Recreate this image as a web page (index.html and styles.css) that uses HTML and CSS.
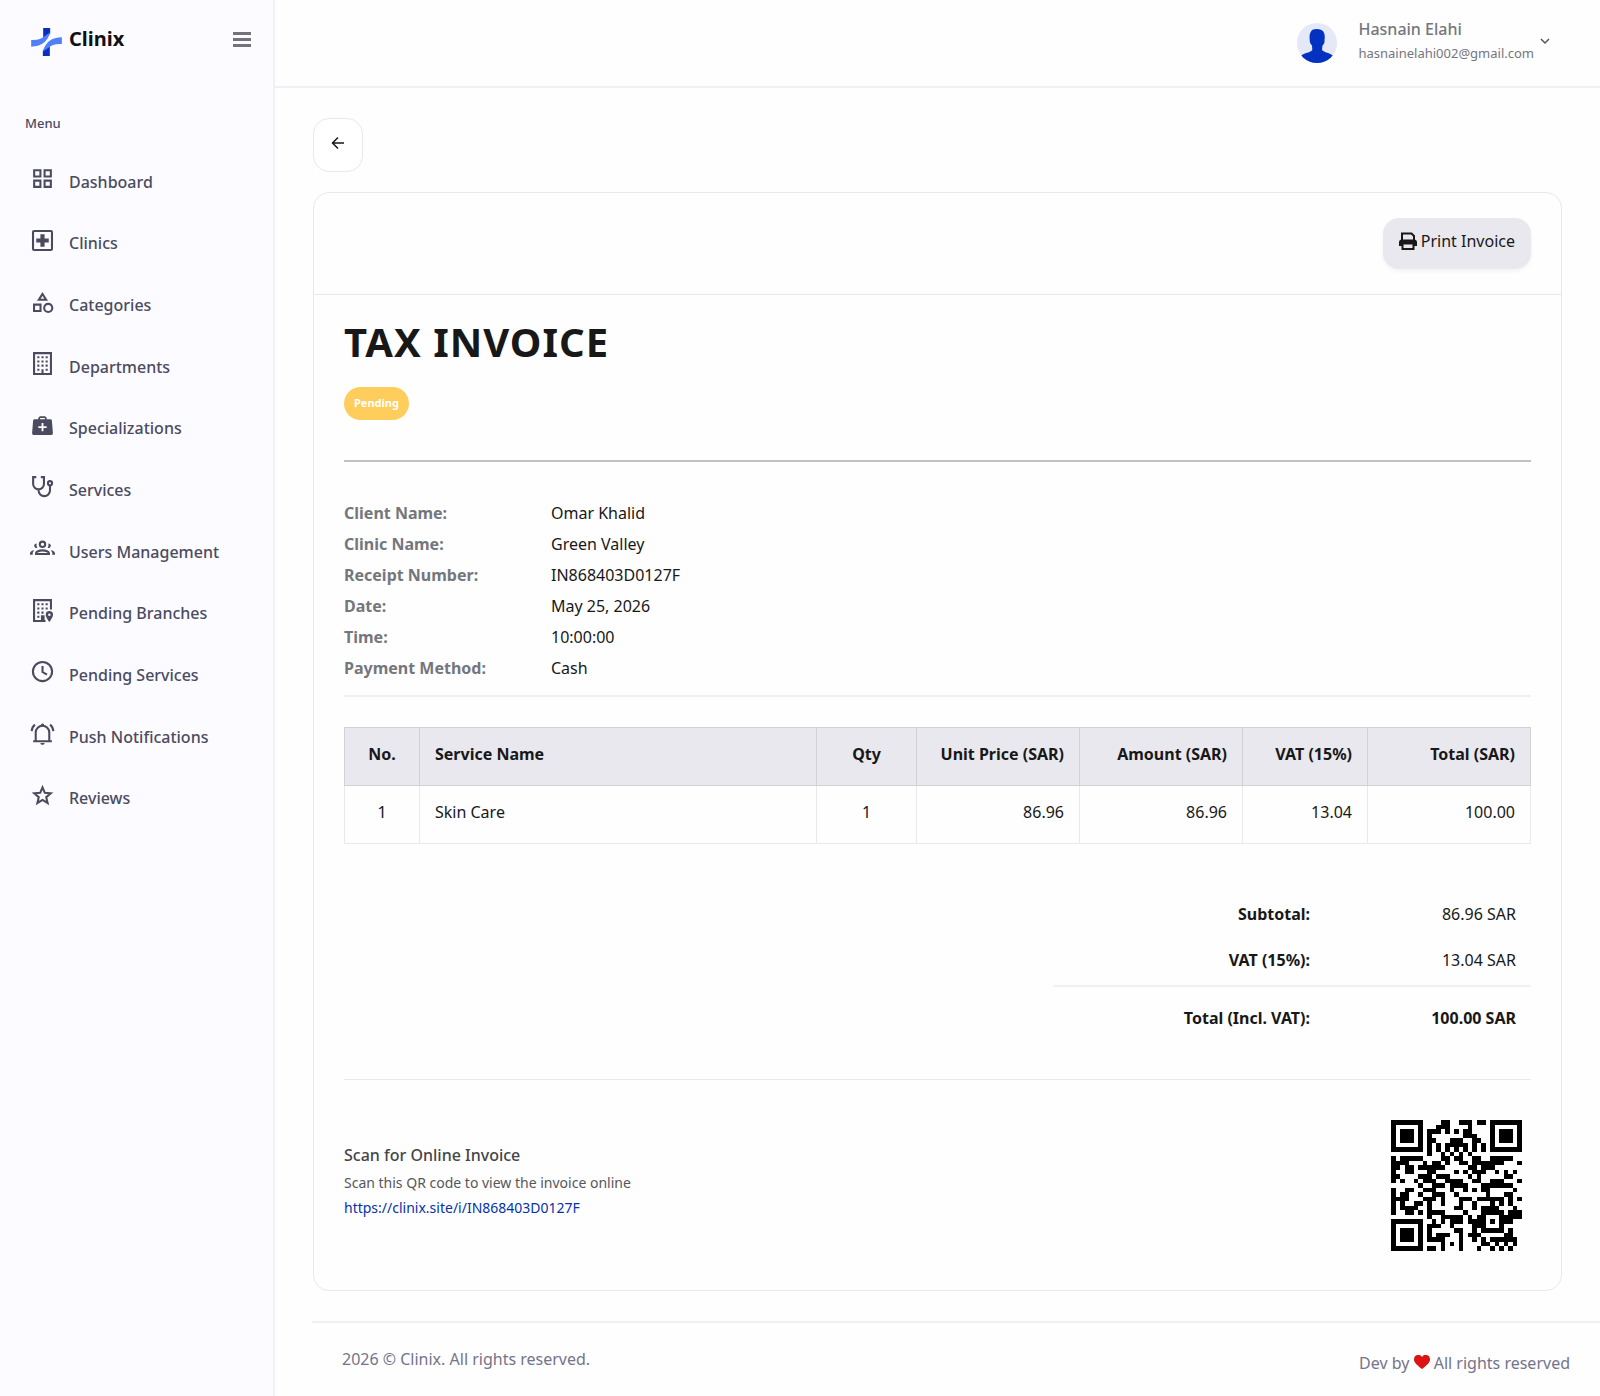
FILE: index.html
```html
<!DOCTYPE html>
<html lang="en">
<head>
<meta charset="utf-8">
<meta name="viewport" content="width=device-width, initial-scale=1">
<title>Clinix - Tax Invoice</title>
<link rel="stylesheet" href="styles.css">
</head>
<body>
<div class="app">
  <aside class="sidebar">
    <div class="brand-row">
      <a class="brand" href="#">
        <svg class="brand-mark" viewBox="0 0 92 84" aria-hidden="true">
          <g id="arm"><path fill="#0a2fc0" d="M36 0H57V16C52 24 46 29 36 32Z"/><path fill="#4f80f7" d="M0 36C20 37 32 32 40 25L57 13C49 42 30 56 0 56Z"/></g>
          <use href="#arm" transform="rotate(180 46 42)"/>
        </svg>
        <span class="brand-name">Clinix</span>
      </a>
      <button class="menu-toggle" type="button" aria-label="Toggle menu"><span></span><span></span><span></span></button>
    </div>
    <p class="menu-title">Menu</p>
    <nav>
      <ul class="menu">
        <li><a href="#"><svg class="icon" viewBox="0 0 24 24"><path d="M4 4h6v6H4zM14 4h6v6h-6zM4 14h6v6H4zM14 14h6v6h-6z"/></svg>Dashboard</a></li>
        <li><a href="#"><svg class="icon" viewBox="0 0 24 24"><rect x="2.9" y="2.9" width="18.2" height="18.2" rx="1"/><path class="fill" d="M10 6h4v4h4v4h-4v4h-4v-4H6v-4h4z"/></svg>Clinics</a></li>
        <li><a href="#"><svg class="icon" viewBox="0 0 24 24"><path d="M12 3.8 15.5 9.3H8.500zM3.900 14h6.200v6.200H3.900z"/><circle cx="17.500" cy="17.200" r="3.900"/></svg>Categories</a></li>
        <li><a href="#"><svg class="icon" viewBox="0 0 24 24"><path d="M3.900 2h16.200v20H3.900z"/><path class="fill" d="M7 5h2v2H7zM11 5h2v2h-2zM15 5h2v2h-2zM7 9h2v2H7zM11 9h2v2h-2zM15 9h2v2h-2zM7 13h2v2H7zM11 13h2v2h-2zM15 13h2v2h-2zM7 17h2v2H7zM15 17h2v2h-2zM11 17.500h2V22h-2z"/></svg>Departments</a></li>
        <li><a href="#"><svg class="icon" viewBox="0 0 24 24"><path class="fill" fill-rule="evenodd" d="M8 6V4.500L9.500 3h5L16 4.500V6h3.500q1.300 0 1.500 1.300L22 19.500Q22 21 20.500 21h-17Q2 21 2 19.500L3 7.300Q3.200 6 4.500 6zM9.700 6h4.600V4.700H9.700zM11.100 9.500v3.100H8v1.800h3.100v3.100h1.800v-3.100H16v-1.800h-3.100V9.500z"/></svg>Specializations</a></li>
        <li><a href="#"><svg class="icon" viewBox="0 0 24 24"><path d="M6 3H3v6.500a5.200 5.200 0 0 0 10.400 0V3h-3M8.200 14.700v1a5.500 5.500 0 0 0 11 0V11"/><circle cx="19.200" cy="8.800" r="2"/></svg>Services</a></li>
        <li><a href="#"><svg class="icon" viewBox="0 0 24 24"><circle cx="12" cy="8" r="2.600"/><path d="M5.800 17.200v-.7c0-1.400 2.900-2.700 6.200-2.700s6.200 1.300 6.200 2.700v.7z"/><path class="fill" d="M6.300 7.100a2.200 2.200 0 1 0 .8 4.200A6 6 0 0 1 6.300 7.100zM17.700 7.100a2.200 2.200 0 1 1-.8 4.200 6 6 0 0 0 .8-4.200zM4.200 13.600C1.800 13.800 0 15 0 16.600V18h2.600v-1.500c0-1.100.6-2.100 1.600-2.900zM19.800 13.600c2.400.2 4.200 1.400 4.200 3V18h-2.600v-1.500c0-1.100-.6-2.100-1.600-2.900z"/></svg>Users Management</a></li>
        <li><a href="#"><svg class="icon" viewBox="0 0 24 24"><path d="M20.100 11V2H3.900v20h11M13 22v-4.500h-1.500V22"/><path class="fill" fill-rule="evenodd" d="M7 5h2v2H7zM11 5h2v2h-2zM15 5h2v2h-2zM7 9h2v2H7zM11 9h2v2h-2zM15 9h2v2h-2zM7 13h2v2H7zM11 13h2v2h-2zM7 17h2v2H7zM18.600 12.500a3.500 3.500 0 0 1 3.500 3.500c0 2.500-3.500 7-3.500 7s-3.500-4.500-3.500-7a3.500 3.500 0 0 1 3.500-3.500zm0 2.400a1.200 1.200 0 1 0 0 2.400 1.200 1.200 0 0 0 0-2.400z"/></svg>Pending Branches</a></li>
        <li><a href="#"><svg class="icon" viewBox="0 0 24 24"><circle cx="12" cy="12" r="9.200"/><path d="M12 6.800v5.700l4.300 2.600"/></svg>Pending Services</a></li>
        <li><a href="#"><svg class="icon" viewBox="0 0 24 24"><path d="M3 19.500h18M5.500 19.500V11a6.500 6.500 0 0 1 13 0v8.500M4.700 3.500Q2 5.700 1.600 9.800M19.300 3.500Q22 5.700 22.400 9.800"/><path class="fill" d="M10.300 4.200a1.700 1.700 0 0 1 3.400 0zM10 21h4a2 1.800 0 0 1-4 0z"/></svg>Push Notifications</a></li>
        <li><a href="#"><svg class="icon" viewBox="0 0 24 24"><path d="M12 4.200 14.200 9.400 19.900 9.900 15.600 13.600 16.900 19.200 12 16.200 7.100 19.200 8.400 13.600 4.100 9.900 9.800 9.400z"/></svg>Reviews</a></li>
      </ul>
    </nav>
  </aside>

  <div class="page">
    <header class="topbar">
      <button class="profile" type="button">
        <svg class="avatar" viewBox="0 0 40 40" aria-hidden="true"><defs><clipPath id="round"><circle cx="20" cy="20" r="20"/></clipPath></defs><circle cx="20" cy="20" r="20" fill="#e4e8f7"/><path clip-path="url(#round)" fill="#0432c0" d="M14 8.500C15.500 5.500 21 5.500 24.500 7 28 9 28 13 27.500 17.500 27.800 20 26.500 21.500 25.500 22.500L25 27C27 29.500 33 30 36 32.500L32 41H8L4 32.500C7 30 14 29.500 15.300 27L15 22.500C13.500 21 12.500 19 12.800 17.500 12.400 14 12.400 11 14 8.500Z"/></svg>
        <span class="profile-text"><span class="profile-name">Hasnain Elahi</span><span class="profile-mail">hasnainelahi002@gmail.com</span></span>
        <svg class="chevron" viewBox="0 0 10 10" aria-hidden="true"><path d="M1 3l4 4 4-4"/></svg>
      </button>
    </header>

    <main class="content">
      <button class="back" type="button" aria-label="Back"><svg viewBox="0 0 14 14" aria-hidden="true"><path d="M13 7H2M7 1.500 1.500 7 7 12.500"/></svg></button>

      <section class="card">
        <div class="card-head">
          <button class="print" type="button"><svg viewBox="0 0 18 18" aria-hidden="true"><path fill="none" stroke="#181818" stroke-width="2" d="M3 9V1.500H12.500L15 4V9M3.500 11.500h11V17h-11z"/><path fill="#181818" d="M3 7.500h12q3 0 3 3V14h-3v-2H3v2H0v-3.500q0-3 3-3z"/></svg>Print Invoice</button>
        </div>
        <div class="card-body">
          <h1>TAX INVOICE</h1>
          <span class="badge">Pending</span>
          <dl class="details">
            <dt>Client Name:</dt><dd>Omar Khalid</dd>
            <dt>Clinic Name:</dt><dd>Green Valley</dd>
            <dt>Receipt Number:</dt><dd>IN868403D0127F</dd>
            <dt>Date:</dt><dd>May 25, 2026</dd>
            <dt>Time:</dt><dd>10:00:00</dd>
            <dt>Payment Method:</dt><dd>Cash</dd>
          </dl>
          <table class="items">
            <colgroup><col class="c-no"><col><col class="c-qty"><col class="c-money"><col class="c-money"><col class="c-vat"><col class="c-money"></colgroup>
            <thead><tr><th class="mid">No.</th><th>Service Name</th><th class="mid">Qty</th><th class="end">Unit Price (SAR)</th><th class="end">Amount (SAR)</th><th class="end">VAT (15%)</th><th class="end">Total (SAR)</th></tr></thead>
            <tbody><tr><td class="mid">1</td><td>Skin Care</td><td class="mid">1</td><td class="end">86.96</td><td class="end">86.96</td><td class="end">13.04</td><td class="end">100.00</td></tr></tbody>
          </table>
          <table class="totals">
            <tbody>
              <tr><th scope="row">Subtotal:</th><td>86.96 SAR</td></tr>
              <tr><th scope="row">VAT (15%):</th><td>13.04 SAR</td></tr>
              <tr class="grand"><th scope="row">Total (Incl. VAT):</th><td>100.00 SAR</td></tr>
            </tbody>
          </table>
          <div class="scan">
            <div class="scan-text">
              <h2>Scan for Online Invoice</h2>
              <p>Scan this QR code to view the invoice online</p>
              <a id="invoice-link" href="https://clinix.site/i/IN868403D0127F">https://clinix.site/i/IN868403D0127F</a>
            </div>
            <svg class="qr" id="qr" viewBox="0 0 29 29" role="img" aria-label="Invoice QR code" shape-rendering="crispEdges"></svg>
          </div>
        </div>
      </section>
    </main>

    <footer class="footer">
      <span>2026 © Clinix. All rights reserved.</span>
      <span class="credit">Dev by <svg viewBox="0 0 16 14" aria-label="love"><path fill="#dc1414" d="M8 14C3 10 0 7.500 0 4.400A4.300 4.300 0 0 1 8 2 4.300 4.300 0 0 1 16 4.400C16 7.500 13 10 8 14Z"/></svg> All rights reserved</span>
    </footer>
  </div>
</div>
<script src="qr.js"></script>
</body>
</html>
```
FILE: styles.css
```css
* { box-sizing: border-box; }

body {
  margin: 0;
  background: #fefefe;
  color: #181818;
  font: 16px/24px "Noto Sans", sans-serif;
}

button { font: inherit; color: inherit; cursor: pointer; }
a { color: inherit; text-decoration: none; }

.app { display: flex; min-height: 100vh; }

/* Sidebar */
.sidebar {
  flex: none;
  width: 275px;
  background: #fcfbff;
  border-right: 2px solid #f1f1f4;
}
.brand-row {
  display: flex;
  justify-content: space-between;
  align-items: center;
  height: 78px;
  padding: 0 22px 0 31px;
}
.brand { display: flex; align-items: center; gap: 7px; }
.brand-mark { width: 31px; height: 28px; margin-top: 6px; }
.brand-name { font-size: 20px; font-weight: 700; color: #111; }
.menu-toggle {
  display: grid;
  gap: 3px;
  width: 18px;
  padding: 0;
  border: 0;
  background: none;
}
.menu-toggle span { height: 3px; background: #72737b; }
.menu-title {
  margin: 33px 0 16px 25px;
  font-size: 13px;
  line-height: 24px;
  font-weight: 500;
  color: #4b4b5f;
}
.menu {
  display: grid;
  grid-auto-rows: 1fr;
  height: 678px;
  margin: 0;
  padding: 0;
  list-style: none;
}
.menu a {
  display: flex;
  align-items: center;
  gap: 14px;
  height: 100%;
  padding-left: 30px;
  font-weight: 500;
  color: #4b4b5f;
}
.icon {
  width: 25px;
  height: 25px;
  margin-bottom: 6px;
  fill: none;
  stroke: currentColor;
  stroke-width: 2;
}
.icon .fill { fill: currentColor; stroke: none; }

/* Top bar */
.page { flex: 1; min-width: 0; display: flex; flex-direction: column; }
.topbar {
  display: flex;
  justify-content: flex-end;
  height: 88px;
  padding-right: 50px;
  border-bottom: 2px solid #f0f0f2;
}
.profile {
  display: flex;
  align-items: center;
  padding: 0;
  border: 0;
  background: none;
  text-align: left;
  color: #74767d;
}
.avatar { width: 40px; height: 40px; margin-right: 21px; }
.profile-text { display: grid; padding-bottom: 4px; }
.profile-name { font-weight: 500; }
.profile-mail { font-size: 13px; }
.chevron {
  width: 10px;
  height: 10px;
  margin: 0 0 4px 6px;
  fill: none;
  stroke: #55565c;
  stroke-width: 1.5;
}

/* Invoice */
.content { padding: 30px 38px; }
.back {
  display: grid;
  place-items: center;
  width: 50px;
  height: 54px;
  margin-bottom: 20px;
  padding: 0 0 4px;
  border: 1px solid #e9e9ec;
  border-radius: 16px;
  background: #fff;
}
.back svg { width: 14px; height: 14px; fill: none; stroke: #181818; stroke-width: 1.5; }
.card { border: 1px solid #e9e9ec; border-radius: 16px; }
.card-head {
  display: flex;
  justify-content: flex-end;
  padding: 25px 30px;
  border-bottom: 1px solid #e9e9ec;
}
.print {
  display: flex;
  align-items: center;
  gap: 4px;
  height: 51px;
  padding: 0 16px 6px;
  border: 0;
  border-radius: 16px;
  background: #e9e8ee;
  box-shadow: 0 2px 4px #0000000d;
}
.print svg { width: 18px; height: 18px; }
.card-body { padding: 17px 30px 30px; }
h1 {
  margin: 0 0 15px;
  font-size: 40px;
  line-height: 60px;
  font-weight: 700;
  letter-spacing: 1px;
}
.badge {
  display: block;
  width: fit-content;
  height: 33px;
  padding: 0 10px;
  border-radius: 17px;
  background: #ffcd5c;
  color: #fff;
  font-size: 11px;
  line-height: 31px;
  font-weight: 700;
}
.details {
  display: grid;
  grid-template-columns: 207px 1fr;
  margin: 40px 0 30px;
  padding: 36px 0 11px;
  border-top: 2px solid #c1c1c3;
  border-bottom: 2px solid #f0f0f2;
  line-height: 31px;
}
.details dt { font-weight: 700; color: #74767d; }
.details dd { margin: 0; }

.items {
  width: 100%;
  table-layout: fixed;
  border-collapse: collapse;
}
.c-no { width: 75px; }
.c-qty { width: 100px; }
.c-money { width: 163px; }
.c-vat { width: 125px; }
.items th, .items td {
  height: 58px;
  padding: 0 15px 6px;
  border: 1px solid #e9e9ec;
  text-align: left;
}
.items th { background: #e9e8ee; border-color: #d2d1d8; font-weight: 700; }
.items .mid { text-align: center; }
.items .end { text-align: right; }

.totals {
  width: 478px;
  margin: 50px 0 29px auto;
  border-collapse: collapse;
  text-align: right;
}
.totals th, .totals td { height: 46px; padding: 0 15px 6px; }
.totals th { width: 272px; font-weight: 700; }
.totals .grand th, .totals .grand td {
  height: 64px;
  padding-bottom: 2px;
  border-top: 2px solid #f0f0f2;
  font-weight: 700;
}

.scan {
  display: flex;
  justify-content: space-between;
  align-items: center;
  padding: 40px 9px 9px 0;
  border-top: 1px solid #e9e9ec;
  font-size: 14px;
  color: #56575b;
}
.scan-text { padding-bottom: 8px; }
.scan h2 { margin: 0 0 4px; font-size: 16px; line-height: 24px; font-weight: 500; color: #454548; }
.scan p { margin: 0 0 1px; }
.scan a { color: #0432a8; }
.qr { width: 131px; height: 131px; }

.footer {
  display: flex;
  justify-content: space-between;
  margin-left: 37px;
  padding: 24px 30px 16px;
  border-top: 2px solid #f0f0f2;
  color: #74748a;
}
.credit { padding-top: 4px; }
.credit svg { width: 16px; height: 14px; }
```
FILE: qr.js
```js
// Draws the invoice link as a version 3, level M QR code (29 x 29 modules).
(function () {
  var SIZE = 29, DATA = 44, ECC = 26, MASK_FORMAT = 0x5e7c;
  var ALNUM = '0123456789ABCDEFGHIJKLMNOPQRSTUVWXYZ $%*+-./:';
  var text = document.getElementById('invoice-link').textContent;

  // The lower-case prefix goes in a byte segment, the receipt part in an alphanumeric one
  var split = text.lastIndexOf('/');
  var head = text.slice(0, split), tail = text.slice(split);
  var bits = [];
  function push(value, count) {
    for (var i = count - 1; i >= 0; i--) bits.push((value >> i) & 1);
  }
  push(4, 4);
  push(head.length, 8);
  for (var c = 0; c < head.length; c++) push(head.charCodeAt(c), 8);
  push(2, 4);
  push(tail.length, 9);
  for (c = 0; c + 1 < tail.length; c += 2)
    push(ALNUM.indexOf(tail[c]) * 45 + ALNUM.indexOf(tail[c + 1]), 11);
  if (c < tail.length) push(ALNUM.indexOf(tail[c]), 6);
  push(0, 4);
  while (bits.length % 8) bits.push(0);
  for (var pad = 0xec; bits.length < DATA * 8; pad ^= 0xfd) push(pad, 8);

  function multiply(a, b) {
    var r = 0;
    for (var i = 7; i >= 0; i--) {
      r = (r << 1) ^ ((r >> 7) * 0x11d);
      r ^= ((b >> i) & 1) * a;
    }
    return r;
  }

  // Reed-Solomon generator, then remainder
  var gen = [];
  for (var g = 0; g < ECC; g++) gen.push(0);
  gen[ECC - 1] = 1;
  var root = 1;
  for (var n = 0; n < ECC; n++) {
    for (var j = 0; j < ECC; j++) {
      gen[j] = multiply(gen[j], root);
      if (j + 1 < ECC) gen[j] ^= gen[j + 1];
    }
    root = multiply(root, 2);
  }
  var rem = gen.map(function () { return 0; });
  for (var k = 0; k < DATA; k++) {
    var byte = parseInt(bits.slice(k * 8, k * 8 + 8).join(''), 2);
    var factor = byte ^ rem.shift();
    rem.push(0);
    gen.forEach(function (v, i) { rem[i] ^= multiply(v, factor); });
  }
  rem.forEach(function (v) { push(v, 8); });

  var grid = [], fixed = [];
  for (var y = 0; y < SIZE; y++) { grid.push(new Array(SIZE).fill(0)); fixed.push(new Array(SIZE).fill(false)); }
  function set(x, y, on) {
    if (x < 0 || y < 0 || x >= SIZE || y >= SIZE) return;
    grid[y][x] = on ? 1 : 0;
    fixed[y][x] = true;
  }
  function rings(cx, cy, radius, light) {
    for (var dy = -radius; dy <= radius; dy++)
      for (var dx = -radius; dx <= radius; dx++)
        set(cx + dx, cy + dy, light.indexOf(Math.max(Math.abs(dx), Math.abs(dy))) < 0);
  }
  for (var t = 0; t < SIZE; t++) { set(6, t, t % 2 === 0); set(t, 6, t % 2 === 0); }
  rings(3, 3, 4, [2, 4]);
  rings(SIZE - 4, 3, 4, [2, 4]);
  rings(3, SIZE - 4, 4, [2, 4]);
  rings(22, 22, 2, [1]);

  // Format information, both copies
  function f(i) { return (MASK_FORMAT >> i) & 1; }
  for (var i = 0; i <= 5; i++) set(8, i, f(i));
  set(8, 7, f(6)); set(8, 8, f(7)); set(7, 8, f(8));
  for (i = 9; i < 15; i++) set(14 - i, 8, f(i));
  for (i = 0; i < 8; i++) set(SIZE - 1 - i, 8, f(i));
  for (i = 8; i < 15; i++) set(8, SIZE - 15 + i, f(i));
  set(8, SIZE - 8, 1);

  // Zigzag placement with mask 2
  var index = 0;
  for (var right = SIZE - 1; right >= 1; right -= 2) {
    if (right === 6) right = 5;
    for (var v = 0; v < SIZE; v++) {
      for (var s = 0; s < 2; s++) {
        var x = right - s;
        var up = ((right + 1) & 2) === 0;
        var row = up ? SIZE - 1 - v : v;
        if (fixed[row][x]) continue;
        grid[row][x] = (bits[index++] || 0) ^ (x % 3 === 0 ? 1 : 0);
      }
    }
  }

  var d = '';
  grid.forEach(function (line, y) {
    line.forEach(function (on, x) { if (on) d += 'M' + x + ' ' + y + 'h1v1h-1z'; });
  });
  var path = document.createElementNS('http://www.w3.org/2000/svg', 'path');
  path.setAttribute('d', d);
  document.getElementById('qr').appendChild(path);
})();
```
